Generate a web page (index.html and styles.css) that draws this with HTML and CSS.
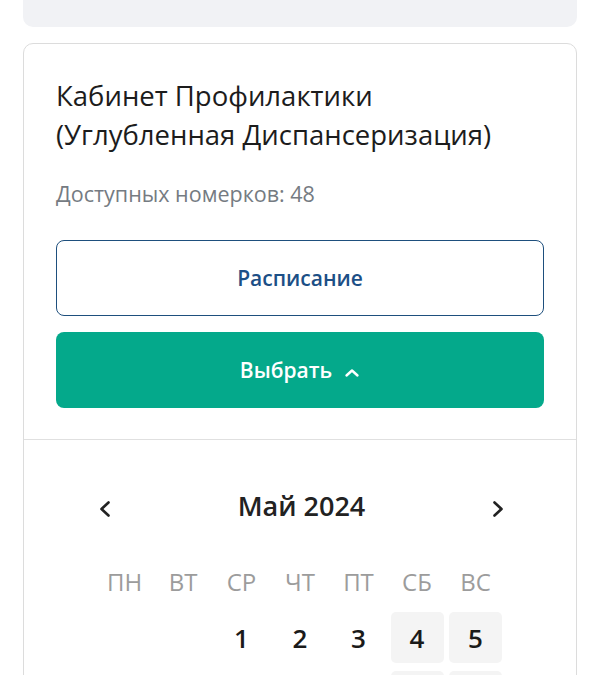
FILE: index.html
```html
<!DOCTYPE html>
<html lang="ru">
<head>
  <meta charset="UTF-8" />
  <title>Запись к врачу</title>
  <meta name="viewport" content="width=device-width, initial-scale=1.0" />
  <link rel="stylesheet" href="styles.css">
</head>
<body>
  <div class="page">
    <div class="top-panel"></div>

    <div class="card">
      <div class="card-head">
        <h2 class="card-title">Кабинет Профилактики (Углубленная Диспансеризация)</h2>
        <p class="card-sub">Доступных номерков: 48</p>
        <button class="btn btn-outline">Расписание</button>
        <button class="btn btn-primary">
          Выбрать
          <svg class="btn-icon" width="16" height="10" viewBox="0 0 16 10">
            <polyline points="2.5,7.5 8,2.5 13.5,7.5" fill="none" stroke="#fff" stroke-width="2.4" stroke-linecap="round" stroke-linejoin="round"/>
          </svg>
        </button>
      </div>

      <div class="calendar">
        <div class="cal-header">
          <button class="cal-nav">
            <svg width="14" height="20" viewBox="0 0 14 20">
              <polyline points="10.5,3.5 3.5,10 10.5,16.5" fill="none" stroke="#222" stroke-width="2.6" stroke-linecap="round" stroke-linejoin="round"/>
            </svg>
          </button>
          <span class="cal-month">Май 2024</span>
          <button class="cal-nav">
            <svg width="14" height="20" viewBox="0 0 14 20">
              <polyline points="3.5,3.5 10.5,10 3.5,16.5" fill="none" stroke="#222" stroke-width="2.6" stroke-linecap="round" stroke-linejoin="round"/>
            </svg>
          </button>
        </div>

        <div class="cal-grid cal-weekdays">
          <span>ПН</span><span>ВТ</span><span>СР</span><span>ЧТ</span><span>ПТ</span><span>СБ</span><span>ВС</span>
        </div>

        <div class="cal-grid cal-days" id="days"></div>
      </div>
    </div>
  </div>

  <script>
    // May 2024 starts on Wednesday
    const days = document.getElementById('days');
    const offset = 2;
    for (let i = 0; i < offset; i++) {
      days.appendChild(document.createElement('span'));
    }
    for (let d = 1; d <= 31; d++) {
      const cell = document.createElement('span');
      cell.className = 'day';
      const col = (offset + d - 1) % 7;
      if (col >= 5) cell.classList.add('weekend');
      cell.textContent = d;
      days.appendChild(cell);
    }
  </script>
</body>
</html>
```

FILE: styles.css
```css
* {
  box-sizing: border-box;
  margin: 0;
  padding: 0;
  font-family: "Open Sans", "Noto Sans", sans-serif;
}

body {
  background-color: #ffffff;
  color: #1f1f1f;
}

.page {
  padding: 0 23px 40px;
}

.top-panel {
  height: 27px;
  background-color: #f1f2f5;
  border-radius: 0 0 10px 10px;
  margin-bottom: 16px;
}

.card {
  border: 1px solid #dcdcdc;
  border-radius: 10px;
  background-color: #fff;
}

.card-head {
  padding: 32px 32px 31px;
  border-bottom: 1px solid #e0e0e0;
  display: flex;
  flex-direction: column;
}

.card-title {
  font-size: 27.5px;
  line-height: 39px;
  font-weight: 400;
  color: #1c1c1c;
}

.card-sub {
  margin-top: 25px;
  font-size: 21.5px;
  line-height: 29px;
  color: #757b82;
}

.btn {
  height: 76px;
  border-radius: 8px;
  font-size: 21px;
  font-weight: 600;
  cursor: pointer;
  display: flex;
  align-items: center;
  justify-content: center;
  gap: 12px;
}

.btn-outline {
  margin-top: 32px;
  background-color: #fff;
  border: 1.5px solid #1e4f7d;
  color: #1c4f86;
}

.btn-primary {
  margin-top: 16px;
  background-color: #04a98b;
  border: none;
  color: #fff;
}

.btn-icon {
  margin-top: 5px;
}

.calendar {
  padding: 48px 32px 20px;
}

.cal-header {
  display: flex;
  align-items: center;
  justify-content: space-between;
  padding: 0 39px 0 42px;
}

.cal-nav {
  background: none;
  border: none;
  display: flex;
  margin-top: 6px;
  cursor: pointer;
}

.cal-month {
  font-size: 27px;
  line-height: 36px;
  font-weight: 600;
  color: #222;
}

.cal-grid {
  display: grid;
  grid-template-columns: repeat(7, 53px);
  column-gap: 5.5px;
  justify-content: center;
}

.cal-weekdays {
  margin-top: 43px;
  font-size: 24px;
  line-height: 30px;
  color: #9c9c9c;
  text-align: center;
}

.cal-days {
  margin-top: 15px;
  row-gap: 8px;
}

.day {
  height: 51px;
  border-radius: 5px;
  display: flex;
  align-items: center;
  justify-content: center;
  font-size: 26px;
  font-weight: 600;
  color: #1a1a1a;
}

.day.weekend {
  background-color: #f4f4f4;
}
```
